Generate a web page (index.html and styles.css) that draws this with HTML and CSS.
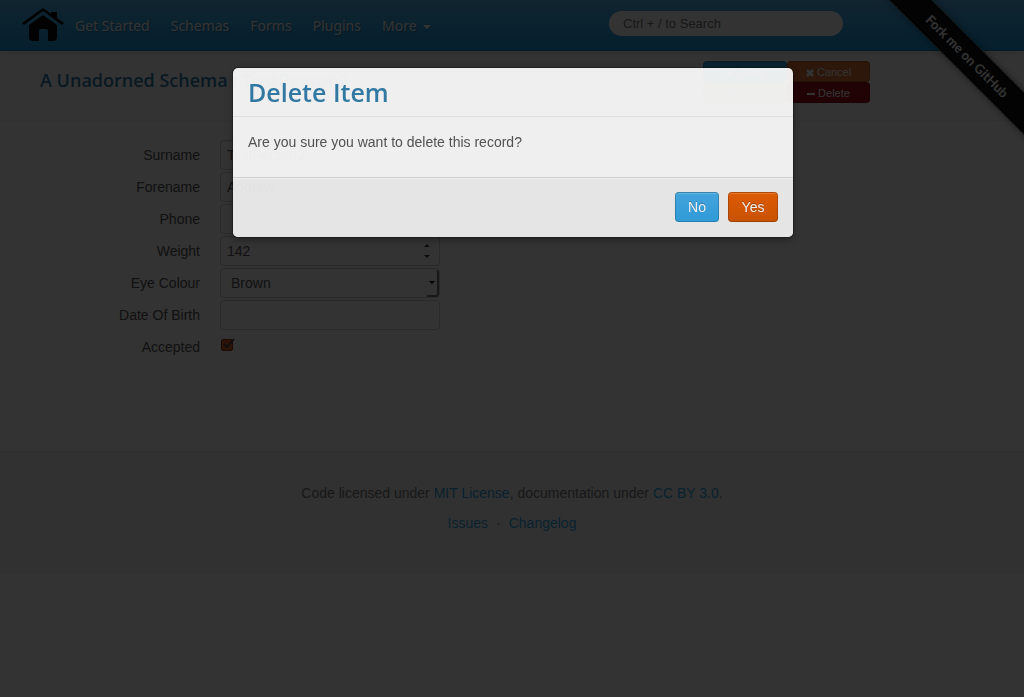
FILE: index.html
```html
<!DOCTYPE html>
<html lang="en">
<head>
<meta charset="utf-8">
<title>A Unadorned Schema</title>
<link rel="stylesheet" href="styles.css">
</head>
<body>
<header class="navbar">
  <a class="brand" href="#" aria-label="Home">
    <svg width="42" height="34" viewBox="0 0 42 34" fill="#0c0c0c"><path d="M21 0 42 15l-2 2L21 3 2 17 0 15Z"/><path d="M29 4h6v7l-6-4ZM21 7l14 10v12q0 4-4 4h-5V23q0-2-2-2h-5q-2 0-2 2v10h-6q-4 0-4-4V17Z"/></svg>
  </a>
  <nav class="menu">
    <a href="#">Get Started</a>
    <a href="#">Schemas</a>
    <a href="#">Forms</a>
    <a href="#">Plugins</a>
    <a href="#">More <span class="caret"></span></a>
  </nav>
  <input class="search" type="search" aria-label="Search" placeholder="Ctrl + / to Search">
</header>
<div class="ribbon-corner"><a class="ribbon" href="#">Fork me on GitHub</a></div>

<main>
  <div class="page-head">
    <h1>A Unadorned Schema : TestPerson2</h1>
    <div class="actions">
      <button class="save" type="button"><svg width="10" height="10" viewBox="0 0 10 10"><path d="M1 5l3 3 5-6" stroke="currentColor" stroke-width="2" fill="none"/></svg> Save</button>
      <button class="cancel" type="button"><svg width="8" height="8" viewBox="0 0 8 8"><path d="M1 1l6 6M7 1 1 7" stroke="currentColor" stroke-width="2.8" fill="none"/></svg> Cancel</button>
      <button class="new" type="button"><svg width="10" height="10" viewBox="0 0 10 10"><path d="M1 5h8M5 1v8" stroke="currentColor" stroke-width="2.4" fill="none"/></svg> New</button>
      <button class="delete" type="button"><svg width="8" height="8" viewBox="0 0 8 8"><path d="M0 4h8" stroke="currentColor" stroke-width="2" fill="none"/></svg> Delete</button>
    </div>
  </div>
  <form class="record">
    <label for="surname">Surname</label><input id="surname" type="text" value="TestPerson2">
    <label for="forename">Forename</label><input id="forename" type="text" value="Andrew">
    <label for="phone">Phone</label><input id="phone" type="text">
    <label for="weight">Weight</label>
    <div class="stepper">
      <input id="weight" type="number" value="142">
      <svg width="6" height="14" viewBox="0 0 6 14" fill="#444"><path d="M3 0l3 3H0ZM3 14l3-3H0Z"/></svg>
    </div>
    <label for="eye">Eye Colour</label>
    <div class="picker">
      <select id="eye"><option>Brown</option><option>Blue</option></select>
      <span class="drop"><span class="caret"></span></span>
    </div>
    <label for="dob">Date Of Birth</label><input id="dob" type="text">
    <label for="accepted">Accepted</label>
    <div class="check">
      <input id="accepted" type="checkbox" checked>
      <svg width="14" height="13" viewBox="0 0 14 13"><path d="M3 6l3 3 7-8" stroke="#444" stroke-width="1.8" fill="none"/></svg>
    </div>
  </form>
</main>

<footer class="footer">
  <p>Code licensed under <a href="#">MIT License</a>, documentation under <a href="#">CC BY 3.0</a>.</p>
  <ul><li><a href="#">Issues</a></li><li>·</li><li><a href="#">Changelog</a></li></ul>
</footer>

<div class="backdrop"></div>
<div class="modal-layer">
  <section class="modal" role="dialog" aria-labelledby="modal-title">
    <header><h3 id="modal-title">Delete Item</h3></header>
    <p>Are you sure you want to delete this record?</p>
    <footer>
      <button class="btn no" type="button">No</button>
      <button class="btn yes" type="button">Yes</button>
    </footer>
  </section>
</div>
</body>
</html>
```
FILE: styles.css
```css
* { box-sizing: border-box; }
body {
  margin: 0;
  background: #fff;
  color: #555;
  font: 14px/20px "Liberation Sans", Arial, sans-serif;
}
a { color: #2fa4e7; text-decoration: none; }
button, input, select { font: inherit; color: inherit; }

.navbar {
  display: flex;
  align-items: center;
  height: 51px;
  padding: 0 181px 0 22px;
  background: linear-gradient(#54b4eb, #2fa4e7 60%, #1d9ce5);
  border-bottom: 1px solid #178acc;
  box-shadow: 0 1px 10px rgba(0, 0, 0, .1);
}
.brand { display: flex; width: 42px; }
.menu { display: flex; gap: 21px; margin-left: 11px; flex: 1; padding-top: 2px; }
.menu a {
  color: #fff;
  font-family: "Noto Sans", sans-serif;
  text-shadow: 1px 1px 1px rgba(0, 0, 0, .3);
}
.caret {
  display: inline-block;
  border: 4px solid transparent;
  border-top-color: currentColor;
  border-bottom: 0;
  vertical-align: middle;
  margin-left: 3px;
}
.search {
  appearance: none;
  width: 234px;
  height: 25px;
  margin-bottom: 4px;
  padding: 0 14px;
  border: 0;
  border-radius: 15px;
  background: #fff;
  font-size: 13px;
}
.search::placeholder { color: #777; opacity: 1; }

.ribbon-corner {
  position: absolute;
  top: 0;
  right: 0;
  width: 149px;
  height: 149px;
  overflow: hidden;
}
.ribbon {
  position: absolute;
  top: 42px;
  right: -48px;
  width: 210px;
  height: 29px;
  background: #111116;
  border: 1px solid #000;
  outline: 1px dashed #777;
  box-shadow: 0 0 8px rgba(0, 0, 0, .5);
  color: #fff;
  font: bold 13px/27px Lato, sans-serif;
  text-align: center;
  transform: rotate(45deg);
}

main { min-height: 400px; }
.page-head {
  display: flex;
  justify-content: space-between;
  align-items: flex-start;
  height: 70px;
  padding: 10px 154px 0 40px;
  border-bottom: 1px solid #f5f5f5;
}
h1, h3 { margin: 0; color: #317eac; font-family: "Open Sans", "Noto Sans", sans-serif; font-weight: 600; }
h1 { font-size: 18px; line-height: 38px; }
.actions { display: grid; grid-template-columns: 84px 83px; }
.actions button {
  height: 21px;
  padding: 0 6px;
  border: 1px solid rgba(0, 0, 0, .15);
  border-radius: 4px;
  color: #fff;
  font-size: 11px;
  line-height: 16px;
}
.actions svg { vertical-align: -1px; }
.save { background: #2fa4e7; }
.cancel { background: #dd7333; }
.new { background: #aaa28a; }
.delete { background: #a50f1c; }

.record {
  display: grid;
  grid-template-columns: 160px 220px;
  grid-auto-rows: 30px;
  gap: 2px 20px;
  padding: 19px 40px 0;
}
.record label { text-align: right; line-height: 30px; }
.record input, .record select {
  width: 100%;
  height: 30px;
  padding: 4px 6px;
  border: 1px solid #ccc;
  border-radius: 4px;
  background: #fff;
  appearance: none;
}
.record input[type="number"] { appearance: textfield; }
.stepper, .picker, .check { position: relative; }
.stepper svg { position: absolute; right: 10px; top: 8px; }
.record select { padding: 4px 10px; }
.drop {
  position: absolute;
  right: 1px;
  top: 2px;
  width: 12px;
  height: 27px;
  border: solid #777;
  border-width: 0 2px 2px 0;
  border-radius: 0 3px 3px 0;
  color: #000;
  line-height: 22px;
}
.drop .caret { border-width: 3px; border-bottom: 0; margin-left: 2px; }
.record input[type="checkbox"] {
  display: block;
  width: 12px;
  height: 12px;
  margin: 7px 1px;
  padding: 0;
  border-color: #8b3510;
  border-radius: 2px;
  background: #dd5f2c;
}
.check svg { position: absolute; left: 1px; top: 6px; pointer-events: none; }

.footer {
  height: 122px;
  padding: 31px 40px;
  border-top: 1px solid #e5e5e5;
  background: #f5f5f5;
  color: #777;
  text-align: center;
}
.footer p { margin: 0 0 10px; }
.footer ul {
  display: flex;
  justify-content: center;
  gap: 8px;
  margin: 0;
  padding: 0;
  list-style: none;
}

.backdrop { position: fixed; inset: 0; background: #000; opacity: .8; }
.modal-layer {
  position: fixed;
  inset: 0;
  display: flex;
  justify-content: center;
  align-items: flex-start;
  padding-top: 67px;
}
.modal {
  width: 562px;
  margin-left: 2px;
  border: 1px solid rgba(0, 0, 0, .3);
  border-radius: 6px;
  background: #fff;
  background-clip: padding-box;
  box-shadow: 0 3px 7px rgba(0, 0, 0, .3);
  opacity: .92;
  overflow: hidden;
}
.modal header { padding: 9px 15px; border-bottom: 1px solid #eee; }
.modal h3 { font-size: 25px; line-height: 30px; }
.modal p { margin: 0; padding: 15px 15px 25px; }
.modal footer {
  display: flex;
  justify-content: flex-end;
  gap: 9px;
  padding: 14px 15px 15px;
  border-top: 1px solid #ddd;
  background: #f5f5f5;
  box-shadow: inset 0 1px 0 #fff;
}
.btn {
  height: 30px;
  padding: 4px 12px;
  border: 1px solid rgba(0, 0, 0, .2);
  border-radius: 4px;
  color: #fff;
  text-shadow: 0 -1px 0 rgba(0, 0, 0, .25);
  box-shadow: inset 0 1px 0 rgba(255, 255, 255, .2);
}
.no { background: linear-gradient(#46aeea, #2fa4e7) border-box; }
.yes { min-width: 50px; background: linear-gradient(#ed5f00, #d45500) border-box; }
```
